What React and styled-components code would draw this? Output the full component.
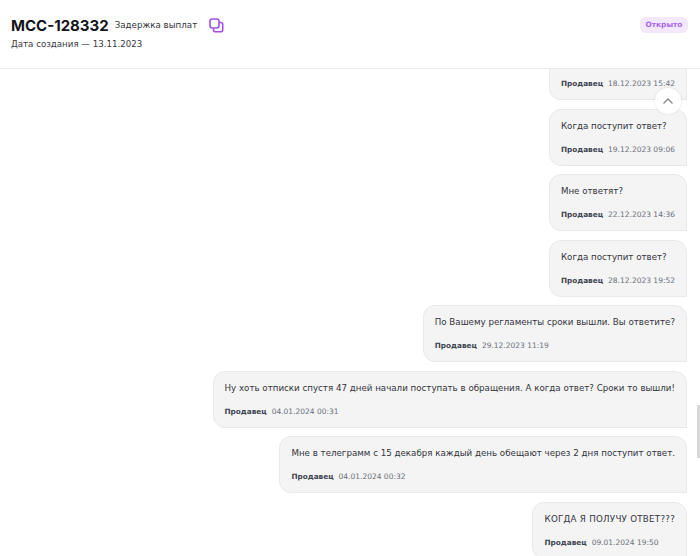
import styled, { createGlobalStyle } from "styled-components";

const GlobalStyle = createGlobalStyle`
  html, body {
    margin: 0;
    padding: 0;
    background: #fff;
    overflow: hidden;
  }
  * { box-sizing: border-box; }
`;

const Page = styled.div`
  position: relative;
  width: 700px;
  height: 556px;
  overflow: hidden;
  font-family: "DejaVu Sans", sans-serif;
  color: #33333b;
`;

const Header = styled.header`
  display: flex;
  justify-content: space-between;
  height: 69px;
  padding: 16px 12px 0 11px;
  border-bottom: 1px solid #ececee;
`;

const TitleRow = styled.div`
  display: flex;
  align-items: center;
  height: 18px;
`;

const Title = styled.h1`
  margin: 0 6px 0 0;
  font-family: "Inter", sans-serif;
  font-size: 15px;
  font-weight: 700;
  color: #14141c;
`;

const Subject = styled.span`
  font-size: 8.7px;
  margin-right: 12px;
`;

const Created = styled.div`
  margin-top: 5px;
  font-size: 8.67px;
  color: #3a3a44;
`;

const Status = styled.span`
  width: 48px;
  height: 16px;
  margin-top: 1px;
  border-radius: 6px;
  background: #f3e8fd;
  color: #a866e8;
  font-size: 7.4px;
  font-weight: 700;
  line-height: 16px;
  text-align: center;
`;

const Feed = styled.main`
  display: flex;
  flex-direction: column;
  align-items: flex-end;
  gap: 8.5px;
  padding-right: 13px;
`;

const Bubble = styled.div`
  padding: 0 11px 10px;
  height: ${(p) => (p.$cut ? "31px" : "57px")};
  display: flex;
  flex-direction: column;
  justify-content: flex-end;
  background: #f4f4f5;
  border: 1px solid #e9e9eb;
  border-top-width: ${(p) => (p.$cut ? 0 : "1px")};
  border-radius: ${(p) => (p.$cut ? "0 0 0 12px" : "12px 12px 0 12px")};
`;

const Text = styled.div`
  font-size: 8.7px;
  line-height: 12px;
  margin-bottom: 12px;
  white-space: nowrap;
  letter-spacing: ${(p) => (p.$caps ? "0.26px" : "0")};
`;

const Meta = styled.div`
  display: flex;
  gap: 5px;
  font-size: 7.5px;
  line-height: 11px;
  white-space: nowrap;
`;

const Author = styled.b`
  color: #3d4450;
  font-size: 7.3px;
  font-weight: 700;
`;

const Time = styled.span`
  color: #6b6f7a;
`;

const ScrollUp = styled.button`
  position: absolute;
  left: 655px;
  top: 88px;
  width: 26px;
  height: 26px;
  padding: 0;
  border: none;
  border-radius: 50%;
  background: #fff;
  box-shadow: 0 0 3px rgba(0, 0, 0, 0.1);
  display: flex;
  align-items: center;
  justify-content: center;
`;

const ScrollThumb = styled.div`
  position: absolute;
  left: 697px;
  top: 405px;
  width: 3px;
  height: 53px;
  background: #d8d8da;
`;

const messages = [
  { date: "18.12.2023 15:42", cut: true },
  { text: "Когда поступит ответ?", date: "19.12.2023 09:06" },
  { text: "Мне ответят?", date: "22.12.2023 14:36" },
  { text: "Когда поступит ответ?", date: "28.12.2023 19:52" },
  { text: "По Вашему регламенты сроки вышли. Вы ответите?", date: "29.12.2023 11:19" },
  { text: "Ну хоть отписки спустя 47 дней начали поступать в обращения. А когда ответ? Сроки то вышли!", date: "04.01.2024 00:31" },
  { text: "Мне в телеграмм с 15 декабря каждый день обещают через 2 дня поступит ответ.", date: "04.01.2024 00:32" },
  { text: "КОГДА Я ПОЛУЧУ ОТВЕТ???", date: "09.01.2024 19:50", caps: true },
];

const CopyIcon = () => (
  <svg width="15" height="15" viewBox="0 0 15 15" fill="none" stroke="#a24fe8" strokeWidth="1.6">
    <rect x="1" y="1" width="9" height="9" rx="2.2" />
    <path d="M10.5 4.5h1.2a2 2 0 0 1 2 2v5.2a2 2 0 0 1-2 2H6.5a2 2 0 0 1-2-2v-1.2" />
  </svg>
);

const App = () => (
  <Page>
    <GlobalStyle />
    <Header>
      <div>
        <TitleRow>
          <Title>MCC-128332</Title>
          <Subject>Задержка выплат</Subject>
          <CopyIcon />
        </TitleRow>
        <Created>Дата создания — 13.11.2023</Created>
      </div>
      <Status>Открыто</Status>
    </Header>
    <Feed>
      {messages.map((m) => (
        <Bubble key={m.date} $cut={m.cut}>
          {m.text && <Text $caps={m.caps}>{m.text}</Text>}
          <Meta>
            <Author>Продавец</Author>
            <Time>{m.date}</Time>
          </Meta>
        </Bubble>
      ))}
    </Feed>
    <ScrollUp aria-label="Наверх">
      <svg width="12" height="8" viewBox="0 0 12 8" fill="none" stroke="#8a8a90" strokeWidth="1.4">
        <path d="M1.5 6.5 6 2l4.5 4.5" />
      </svg>
    </ScrollUp>
    <ScrollThumb />
  </Page>
);

export default App;
